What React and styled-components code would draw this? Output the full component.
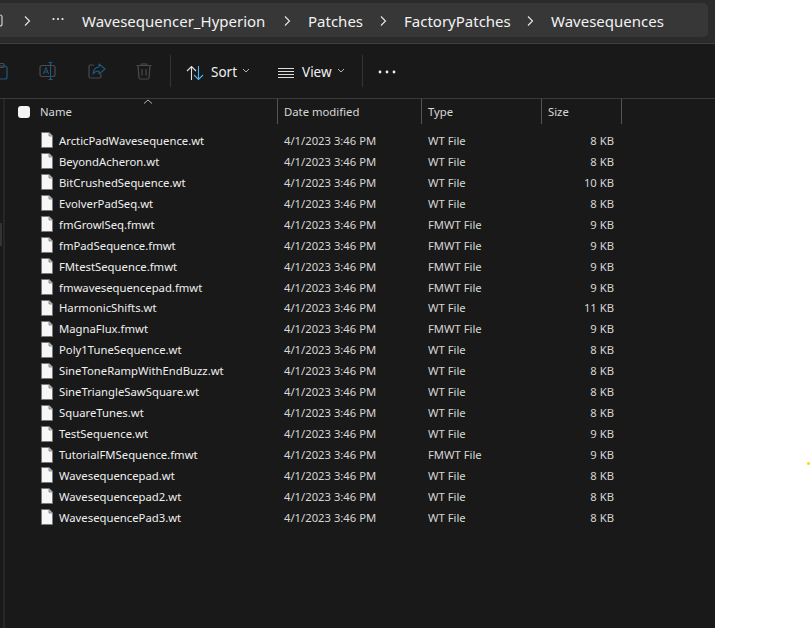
import React from "react";
import styled, { createGlobalStyle } from "styled-components";

const files = [
  ["ArcticPadWavesequence.wt", "WT File", "8 KB"],
  ["BeyondAcheron.wt", "WT File", "8 KB"],
  ["BitCrushedSequence.wt", "WT File", "10 KB"],
  ["EvolverPadSeq.wt", "WT File", "8 KB"],
  ["fmGrowlSeq.fmwt", "FMWT File", "9 KB"],
  ["fmPadSequence.fmwt", "FMWT File", "9 KB"],
  ["FMtestSequence.fmwt", "FMWT File", "9 KB"],
  ["fmwavesequencepad.fmwt", "FMWT File", "9 KB"],
  ["HarmonicShifts.wt", "WT File", "11 KB"],
  ["MagnaFlux.fmwt", "FMWT File", "9 KB"],
  ["Poly1TuneSequence.wt", "WT File", "8 KB"],
  ["SineToneRampWithEndBuzz.wt", "WT File", "8 KB"],
  ["SineTriangleSawSquare.wt", "WT File", "8 KB"],
  ["SquareTunes.wt", "WT File", "8 KB"],
  ["TestSequence.wt", "WT File", "9 KB"],
  ["TutorialFMSequence.fmwt", "FMWT File", "9 KB"],
  ["Wavesequencepad.wt", "WT File", "8 KB"],
  ["Wavesequencepad2.wt", "WT File", "8 KB"],
  ["WavesequencePad3.wt", "WT File", "8 KB"],
];

const Global = createGlobalStyle`
  html, body { margin: 0; padding: 0; background: #fff; }
  body { font-family: "Noto Sans", "Open Sans", sans-serif; }
`;

const Page = styled.div`
  position: relative;
  width: 812px;
  height: 628px;
  overflow: hidden;
  background: #fff;
`;
const Ventana = styled.div`
  width: 715px;
  height: 628px;
  background: #191919;
  display: flex;
  flex-direction: column;
`;
const BarraRuta = styled.div`
  height: 44px;
  box-sizing: border-box;
  flex-shrink: 0;
  padding: 3px 7px 6px 0;
  background: #2b2b2b;
  border-bottom: 1px solid #3f3f3f;
`;
const Ruta = styled.div`
  height: 34px;
  box-sizing: border-box;
  padding-top: 1px;
  background: #373737;
  border-radius: 0 5px 5px 0;
  display: flex;
  align-items: center;
  color: #f2f2f2;
  font-size: 15px;
  overflow: hidden;
`;
const Carpeta = styled.svg`
  width: 12px;
  height: 18px;
  margin-left: -8px;
  flex-shrink: 0;
`;
const Puntos = styled.svg`
  width: 12px;
  height: 4px;
  flex-shrink: 0;
  margin: -3px 18px 0 21px;
`;
const Flecha = styled.svg`
  width: 8px;
  height: 12px;
  flex-shrink: 0;
  margin: ${(p) => p.$margen};
`;
const Miga = styled.span`
  width: ${(p) => p.$ancho}px;
  flex-shrink: 0;
  white-space: nowrap;
`;
const Herramientas = styled.div`
  height: 55px;
  flex-shrink: 0;
  box-sizing: border-box;
  border-bottom: 1px solid #3a3a3a;
  display: flex;
  align-items: center;
`;
const IconoHerr = styled.svg`
  width: ${(p) => p.$ancho || 20}px;
  height: 20px;
  flex-shrink: 0;
  margin-left: ${(p) => p.$izq}px;
`;
const Separador = styled.div`
  width: 1px;
  height: 32px;
  background: #333;
  flex-shrink: 0;
  margin-left: ${(p) => p.$izq}px;
`;
const Etiqueta = styled.span`
  color: #f0f0f0;
  font-size: 13.5px;
  margin: 2px 0 0 ${(p) => p.$izq}px;
`;
const Chevron = styled.svg`
  width: 8px;
  height: 5px;
  margin-left: ${(p) => p.$izq}px;
  margin-top: -2px;
`;
const Cuerpo = styled.div`
  position: relative;
  flex: 1;
  &::before {
    content: "";
    position: absolute;
    left: 3px;
    top: 0;
    bottom: 0;
    width: 2px;
    background: #262626;
  }
`;
const BarraScroll = styled.div`
  position: absolute;
  left: 0;
  top: 124px;
  width: 2px;
  height: 23px;
  background: #333;
`;
const Columnas = styled.div`
  display: grid;
  grid-template-columns: 277px 144px 120px 81px;
  height: 26px;
  position: relative;
`;
const Cabecera = styled.div`
  display: flex;
  align-items: center;
  box-sizing: border-box;
  height: 25px;
  color: #d8d8d8;
  font-size: 11.3px;
  padding-left: 6px;
  border-left: 1px solid #555;
  &:last-child { border-right: 1px solid #555; }
`;
const CabeceraNombre = styled(Cabecera)`
  border-left: none;
  padding-left: 18px;
`;
const Casilla = styled.span`
  width: 12px;
  height: 12px;
  border-radius: 3px;
  background: #f4f4f4;
  margin-right: 10px;
`;
const Orden = styled.svg`
  position: absolute;
  left: 143px;
  top: 0;
  width: 10px;
  height: 5px;
`;
const Lista = styled.div`
  padding-top: 5px;
  display: flex;
  flex-direction: column;
`;
const Fila = styled.div`
  display: grid;
  grid-template-columns: 277px 144px 120px 73px;
  height: 20.94px;
  align-items: center;
  color: #d6d6d6;
  font-size: 11.25px;
  white-space: nowrap;
`;
const Nombre = styled.div`
  display: flex;
  align-items: center;
  padding-left: 41px;
  color: #efefef;
  font-size: 11.3px;
`;
const IconoArchivo = styled.svg`
  width: 12px;
  height: 16px;
  margin-right: 6px;
  flex-shrink: 0;
`;
const Celda = styled.div`
  padding-left: 7px;
`;
const Tamano = styled.div`
  text-align: right;
`;
const Punto = styled.div`
  position: absolute;
  left: 807px;
  top: 462px;
  width: 3px;
  height: 3px;
  border-radius: 50%;
  background: #ffd800;
`;

const Sep = ({ margen }) => (
  <Flecha $margen={margen} viewBox="0 0 8 12">
    <path d="M2 1.5 L6.5 6 L2 10.5" fill="none" stroke="#e8e8e8" strokeWidth="1.1" />
  </Flecha>
);

const Pico = ({ izq }) => (
  <Chevron $izq={izq} viewBox="0 0 8 5">
    <path d="M1 1 L4 4 L7 1" fill="none" stroke="#b5b5b5" strokeWidth="1" />
  </Chevron>
);

const App = () => (
  <Page>
    <Global />
    <Ventana>
      <BarraRuta>
        <Ruta>
          <Carpeta viewBox="0 0 12 18">
            <path d="M0 3 H8 Q10 3 10 5 V12 Q10 14 8 14 H0" fill="none" stroke="#cfcfcf" strokeWidth="1.2" />
            <path d="M3 16.5 H8" stroke="#cfcfcf" strokeWidth="1.2" />
          </Carpeta>
          <Sep margen="0 0 0 19px" />
          <Puntos viewBox="0 0 12 4" fill="#f0f0f0">
            <circle cx="1.5" cy="2" r="1.1" />
            <circle cx="6" cy="2" r="1.1" />
            <circle cx="10.5" cy="2" r="1.1" />
          </Puntos>
          <Miga $ancho={201}>Wavesequencer_Hyperion</Miga>
          <Sep margen="0 17px 0 0" />
          <Miga $ancho={71}>Patches</Miga>
          <Sep margen="0 17px 0 0" />
          <Miga $ancho={122}>FactoryPatches</Miga>
          <Sep margen="0 17px 0 0" />
          <Miga $ancho={120}>Wavesequences</Miga>
        </Ruta>
      </BarraRuta>

      <Herramientas>
        <IconoHerr $izq={-9} viewBox="0 0 20 20" fill="none">
          <rect x="3" y="5" width="13" height="13" rx="2" stroke="#1d5a80" strokeWidth="1.2" />
          <rect x="6" y="2.5" width="7" height="4" rx="1" stroke="#4a4a4a" strokeWidth="1.2" />
        </IconoHerr>
        <IconoHerr $izq={28} $ancho={18} viewBox="0 0 18 20" fill="none">
          <rect x="1" y="4.5" width="15" height="11" rx="2" stroke="#4b4b4b" strokeWidth="1.2" />
          <path d="M4.5 13 L7 6.5 L9.5 13 M5.3 11 H8.7" stroke="#1d5a80" strokeWidth="1" />
          <path d="M11.5 1.5 V18.5 M9.5 1.5 H13.5 M9.5 18.5 H13.5" stroke="#1d5a80" strokeWidth="1.1" />
        </IconoHerr>
        <IconoHerr $izq={30} viewBox="0 0 20 20" fill="none">
          <path d="M7 4 H3.5 Q2 4 2 5.5 V15.5 Q2 17 3.5 17 H12.5 Q14 17 14 15.5 V13" stroke="#4b4b4b" strokeWidth="1.2" />
          <path d="M12 3 L18 8 L12 13 V10 Q8 10 6 13 Q7 6 12 6 Z" stroke="#1d5a80" strokeWidth="1.1" strokeLinejoin="round" />
        </IconoHerr>
        <IconoHerr $izq={27} viewBox="0 0 20 20" fill="none">
          <path d="M2.5 4.5 H17.5 M7.5 4.5 V3 H12.5 V4.5 M4 4.5 L5 17 Q5.2 18 6 18 H14 Q14.8 18 15 17 L16 4.5 M8 8 V14.5 M12 8 V14.5" stroke="#4b4b4b" strokeWidth="1.2" />
        </IconoHerr>
        <Separador $izq={16} />
        <IconoHerr $izq={14} viewBox="0 0 20 20" fill="none">
          <path d="M6.5 19 V5.5 M2 10 L6.5 5.5 L11 10" stroke="#e2e2e2" strokeWidth="1.1" />
          <path d="M13.5 5 V18.5 M9 14 L13.5 18.5 L18 14" stroke="#4cb4f0" strokeWidth="1.1" />
        </IconoHerr>
        <Etiqueta $izq={6}>Sort</Etiqueta>
        <Pico izq={5} />
        <IconoHerr $izq={28} $ancho={16} viewBox="0 0 16 20" fill="none">
          <path d="M0 7.5 H16 M0 10.5 H16 M0 13.5 H16 M0 16.5 H16" stroke="#dcdcdc" strokeWidth="1" />
        </IconoHerr>
        <Etiqueta $izq={8}>View</Etiqueta>
        <Pico izq={5} />
        <Separador $izq={17} />
        <IconoHerr $izq={14} viewBox="0 0 20 20" fill="#f0f0f0">
          <circle cx="3" cy="11" r="1.4" />
          <circle cx="10" cy="11" r="1.4" />
          <circle cx="17" cy="11" r="1.4" />
        </IconoHerr>
      </Herramientas>

      <Cuerpo>
        <BarraScroll />
        <Columnas>
          <Orden viewBox="0 0 10 5">
            <path d="M1 4.5 L5 1 L9 4.5" fill="none" stroke="#b0b0b0" strokeWidth="1" />
          </Orden>
          <CabeceraNombre>
            <Casilla />
            Name
          </CabeceraNombre>
          <Cabecera>Date modified</Cabecera>
          <Cabecera>Type</Cabecera>
          <Cabecera>Size</Cabecera>
        </Columnas>

        <Lista>
          {files.map(([nombre, tipo, tamano]) => (
            <Fila key={nombre}>
              <Nombre>
                <IconoArchivo viewBox="0 0 12 16">
                  <path d="M0.5 0.5 H8 L11.5 4 V15.5 H0.5 Z" fill="#f7f7f7" stroke="#7a7a7a" strokeWidth="1" />
                  <path d="M8 0.5 V4 H11.5" fill="#bdbdbd" stroke="#7a7a7a" strokeWidth="0.8" />
                </IconoArchivo>
                {nombre}
              </Nombre>
              <Celda>4/1/2023 3:46 PM</Celda>
              <Celda>{tipo}</Celda>
              <Tamano>{tamano}</Tamano>
            </Fila>
          ))}
        </Lista>
      </Cuerpo>
    </Ventana>
    <Punto />
  </Page>
);

export default App;
